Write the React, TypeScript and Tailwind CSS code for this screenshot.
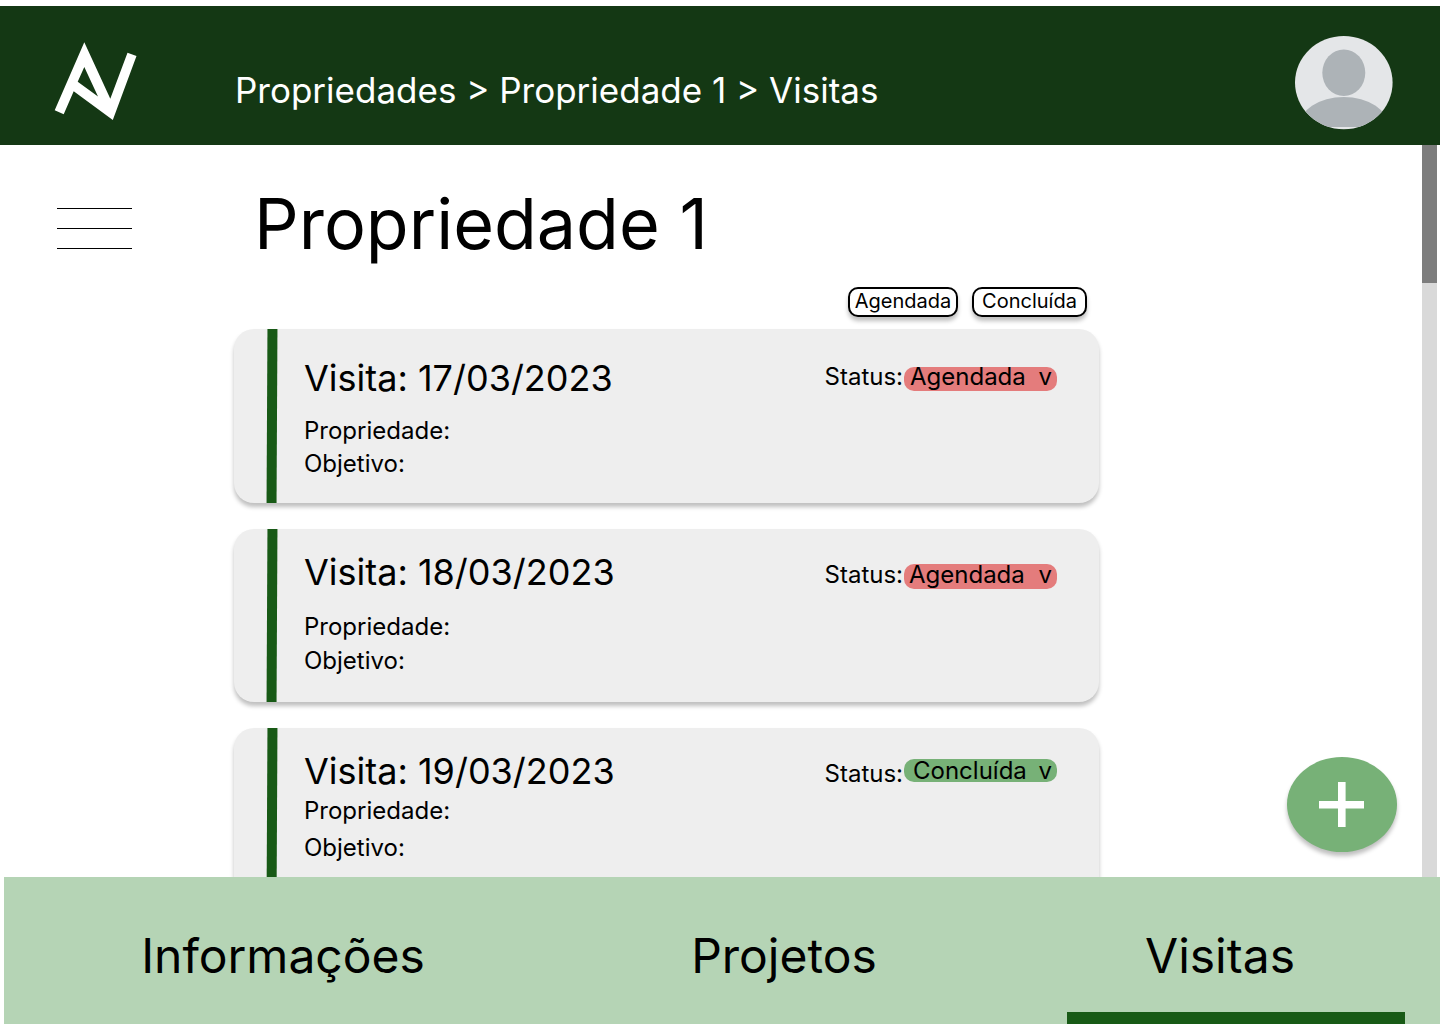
type Visit = {
  id: string;
  date: string;
  status: 'Agendada' | 'Concluída';
  bodyClass: string;
  fieldsClass: string;
  statusRowClass: string;
  pillClass: string;
  selectClass: string;
};

const visits: Visit[] = [
  {
    id: 'v1',
    date: '17/03/2023',
    status: 'Agendada',
    bodyClass: 'pt-[27px] pb-[23px]',
    fieldsClass: 'mt-[14px]',
    statusRowClass: 'mt-[6px]',
    pillClass: 'mt-[5px] h-[24px] bg-[#e47c7c]',
    selectClass: '-mt-[5px] pl-[6px]',
  },
  {
    id: 'v2',
    date: '18/03/2023',
    status: 'Agendada',
    bodyClass: 'pt-[21px] pb-[25px]',
    fieldsClass: 'mt-[16px] gap-px',
    statusRowClass: 'mt-[10px]',
    pillClass: 'mt-[4px] h-[25px] bg-[#e47c7c]',
    selectClass: '-mt-[4px] pl-[5px]',
  },
  {
    id: 'v3',
    date: '19/03/2023',
    status: 'Concluída',
    bodyClass: 'pt-[21px] pb-[38px]',
    fieldsClass: 'mt-px gap-1',
    statusRowClass: 'mt-[10px]',
    pillClass: 'h-[23px] bg-[#77b177]',
    selectClass: '-mt-[3px] pl-[9px]',
  },
];

const tabs = [
  { label: 'Informações', active: false },
  { label: 'Projetos', active: false },
  { label: 'Visitas', active: true },
];

function Logo() {
  return (
    <svg width="83" height="78" viewBox="54 42 83 78" role="img" aria-label="AV">
      <path
        fill="#fff"
        fillRule="evenodd"
        d="M84.3 42.3 L110.3 98.8 L127.5 52.8 L136.5 56 L112.8 120 L73.7 91.2 L63.7 114.3 L54.7 110.3 Z M84.3 67 L77.7 81.8 L98 96.5 Z"
      />
    </svg>
  );
}

function Avatar() {
  return (
    <svg width="98" height="94" viewBox="0 0 98 94" aria-hidden="true">
      <defs>
        <clipPath id="avatar-clip">
          <ellipse cx="48.8" cy="46.6" rx="48.8" ry="46.6" />
        </clipPath>
      </defs>
      <g clipPath="url(#avatar-clip)">
        <rect width="98" height="94" fill="#e4e6e8" />
        <ellipse cx="48.8" cy="36.8" rx="21.5" ry="23.3" fill="#adb3b7" />
        <path d="M3.8 91 A45 30 0 0 1 93.8 91 Z" fill="#adb3b7" />
      </g>
    </svg>
  );
}

function VisitCard({ visit }: { visit: Visit }) {
  return (
    <article className="flex shrink-0 rounded-[20px] bg-[#eeeeee] pr-[42px] pl-[33px] shadow-[0_4px_4px_rgba(0,0,0,0.25)]">
      <div className="w-[10px] shrink-0 skew-x-[-0.3deg] bg-[#185a16]" />
      <div className={`ml-[27px] flex flex-1 items-start justify-between ${visit.bodyClass}`}>
        <div>
          <h2 className="text-[36px] leading-[44px]">Visita: {visit.date}</h2>
          <div className={`flex flex-col text-[24px] leading-[33px] ${visit.fieldsClass}`}>
            <p>Propriedade:</p>
            <p>Objetivo:</p>
          </div>
        </div>
        <div className={`flex items-start gap-px text-[24px] leading-[29px] ${visit.statusRowClass}`}>
          <label htmlFor={visit.id}>Status:</label>
          <div className={`relative flex w-[153px] items-start rounded-[10px] ${visit.pillClass}`}>
            <select
              id={visit.id}
              defaultValue={visit.status}
              className={`h-[29px] w-full cursor-pointer appearance-none bg-transparent leading-[29px] ${visit.selectClass}`}
            >
              <option>Agendada</option>
              <option>Concluída</option>
            </select>
            <span className={`pointer-events-none absolute right-[5px] ${visit.selectClass}`} aria-hidden="true">
              v
            </span>
          </div>
        </div>
      </div>
    </article>
  );
}

export default function App() {
  return (
    <div className="flex h-screen flex-col overflow-hidden bg-white pt-[6px] font-['Inter',sans-serif] text-black">
      <header className="flex shrink-0 items-start bg-[#143814] pt-[30px] pr-[47px] pb-[15px] pl-[54px] text-white">
        <a href="#inicio" className="mt-[6px] shrink-0">
          <Logo />
        </a>
        <nav aria-label="Caminho" className="mt-[32px] ml-[98px] flex-1 text-[35px] leading-[44px]">
          <a href="#propriedades">Propriedades</a> &gt; <a href="#propriedade-1">Propriedade 1</a> &gt;{' '}
          <a href="#visitas">Visitas</a>
        </nav>
        <button type="button" aria-label="Perfil" className="shrink-0 cursor-pointer">
          <Avatar />
        </button>
      </header>

      <div className="relative flex min-h-0 flex-1">
        <aside className="w-[234px] shrink-0 pt-[63px] pl-[57px]">
          <button type="button" aria-label="Menu" className="flex w-[75px] cursor-pointer flex-col gap-[19px]">
            <span className="h-px w-full bg-black" />
            <span className="h-px w-full bg-black" />
            <span className="h-px w-full bg-black" />
          </button>
        </aside>

        <main className="mr-[323px] flex min-w-0 flex-1 flex-col pt-[35px]">
          <h1 className="ml-[20px] text-[70px] leading-[87px]">Propriedade 1</h1>
          <div className="mt-[20px] mr-[12px] flex justify-end gap-[14px] text-[20px] leading-[24px]">
            <button
              type="button"
              className="w-[110px] cursor-pointer rounded-[10px] border-2 border-black bg-white pb-[2px] shadow-[0_4px_4px_rgba(0,0,0,0.25)]"
            >
              Agendada
            </button>
            <button
              type="button"
              className="w-[115px] cursor-pointer rounded-[10px] border-2 border-black bg-white pb-[2px] shadow-[0_4px_4px_rgba(0,0,0,0.25)]"
            >
              Concluída
            </button>
          </div>
          <div className="mt-[12px] flex flex-col gap-[26px]">
            {visits.map((visit) => (
              <VisitCard key={visit.id} visit={visit} />
            ))}
          </div>
        </main>

        <div className="mr-[3px] w-[15px] shrink-0 bg-[#d9d9d9]">
          <div className="h-[138px] bg-[#7d7d7d]" />
        </div>

        <button
          type="button"
          aria-label="Adicionar visita"
          className="absolute right-[43px] bottom-[25px] flex h-[95px] w-[110px] cursor-pointer items-center justify-center rounded-[50%] bg-[#77b177] shadow-[0_4px_4px_rgba(0,0,0,0.25)]"
        >
          <svg width="46" height="46" viewBox="0 0 46 46" aria-hidden="true">
            <path d="M19 0h7.6v19H45v7.6H26.6V45H19V26.6H0V19h19z" fill="#fff" />
          </svg>
        </button>
      </div>

      <nav
        aria-label="Seções"
        className="relative z-10 ml-[4px] grid shrink-0 grid-cols-[558fr_444fr_428fr] bg-[#b5d4b5] pr-[6px] text-[48px] leading-[58px]"
      >
        {tabs.map((tab) => (
          <a
            key={tab.label}
            href={`#${tab.label.toLowerCase()}`}
            aria-current={tab.active ? 'page' : undefined}
            className="relative pt-[50px] pb-[39px] text-center"
          >
            {tab.label}
            {tab.active && <span className="absolute right-[29px] bottom-0 left-[61px] h-[12px] bg-[#185a16]" />}
          </a>
        ))}
      </nav>
    </div>
  );
}
